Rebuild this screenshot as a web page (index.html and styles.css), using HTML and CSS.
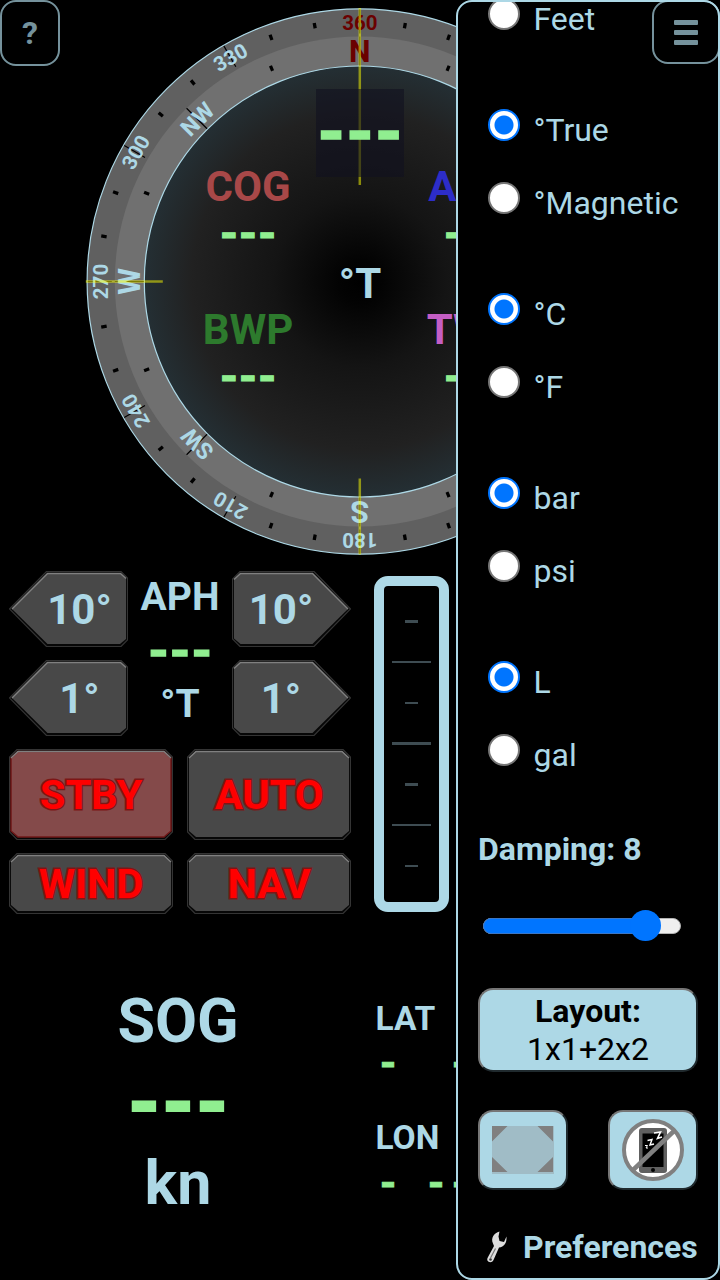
FILE: index.html
```html
<!DOCTYPE html>
<html lang="en">
<head>
    <meta charset="UTF-8">
    <meta name="viewport" content="width=device-width, initial-scale=1.0">
    <title>Instruments</title>
    <link rel="stylesheet" href="styles.css">
</head>
<body>
    <div class="screen">
        <svg class="compass" viewBox="0 0 720 560">
            <defs>
                <radialGradient id="dial">
                    <stop offset="0" stop-color="#000"/>
                    <stop offset="0.1" stop-color="#030303"/>
                    <stop offset="0.4" stop-color="#141414"/>
                    <stop offset="0.78" stop-color="#212121"/>
                    <stop offset="1" stop-color="#242f34"/>
                </radialGradient>
            </defs>
            <g transform="translate(359.8 281.5)">
                <circle r="272.7" fill="#606060"/>
                <circle r="245" fill="#707070"/>
                <circle r="215.5" fill="url(#dial)"/>
                <circle class="rim" r="272.7"/>
                <circle class="rim" r="215.5"/>
                <!-- ticks: 10deg, 30deg, 22.5deg, 45deg -->
                <circle class="tick" r="259.8" stroke-width="5.5" pathLength="360" stroke-dasharray="0 9.64 .72 9.28 .72 9.64"/>
                <circle class="tick" r="260" stroke-width="24" pathLength="360" stroke-dasharray=".26 29.74" stroke-dashoffset=".13"/>
                <circle class="tick" r="230.7" stroke-width="5.5" pathLength="360" stroke-dasharray="0 22.1 .8 22.1"/>
                <circle class="tick" r="230.5" stroke-width="29" pathLength="360" stroke-dasharray=".3 44.7" stroke-dashoffset=".15"/>
                <g class="deg">
                    <text y="-251.5" class="north">360</text>
                    <text y="-251.5" transform="rotate(30)">030</text>
                    <text y="-251.5" transform="rotate(180)">180</text>
                    <text y="-251.5" transform="rotate(210)">210</text>
                    <text y="-251.5" transform="rotate(240)">240</text>
                    <text y="-251.5" transform="rotate(270)">270</text>
                    <text y="-251.5" transform="rotate(300)">300</text>
                    <text y="-251.5" transform="rotate(330)">330</text>
                </g>
                <g class="point">
                    <text y="-219.5" class="north">N</text>
                    <text y="-219.5" transform="rotate(180)">S</text>
                    <text y="-219.5" transform="rotate(270)">W</text>
                    <text y="-221.5" class="half" transform="rotate(225)">SW</text>
                    <text y="-221.5" class="half" transform="rotate(315)">NW</text>
                </g>
                <path class="cross" d="M0-273.5V-96.5M0 273V197M-274 0H-197"/>
            </g>
            <rect x="316" y="89" width="88" height="88" fill="#101020" opacity=".6"/>
            <text class="dash" x="360" y="151.5" font-size="67">---</text>
            <g class="label" font-size="42">
                <text x="248" y="201" fill="#a84848">COG</text>
                <text x="474" y="201" fill="#2d2dc8">AWA</text>
                <text x="248" y="344" fill="#2d7a2d">BWP</text>
                <text x="472" y="344" fill="#c45ec4">TWA</text>
                <text x="360" y="298">°T</text>
            </g>
            <g font-size="44.5">
                <text class="dash" x="248" y="246.5">---</text>
                <text class="dash" x="472" y="246.5">---</text>
                <text class="dash" x="248" y="389.5">---</text>
                <text class="dash" x="472" y="389.5">---</text>
            </g>
        </svg>

        <div class="middle">
            <div class="pilot">
                <div class="row">
                    <svg class="key turn" viewBox="0 0 119 76">
                        <path class="edge" d="M.5 38 37.5.5H112L118.500 7V69L112 75.500H37.500Z"/>
                        <path class="face" d="M3 38 38.500 2.500H111.500L117 7.500V68L111 73H38.500Z"/>
                        <path class="shine" d="M3 38 38.500 2.500H111.500L117 7.500"/>
                        <text class="label" x="70.500" y="53" font-size="42">10°</text>
                    </svg>
                    <svg class="key turn" viewBox="0 0 119 76">
                        <path class="edge" d="M118.500 38 82 .5H8L.5 8V68L8 75.500H82Z"/>
                        <path class="face" d="M116 38 80.500 2.500H8.500L2 8.500V67.500L8.500 73H80.500Z"/>
                        <path class="shine" d="M116 38 80.500 2.500H8.500L2 8.500"/>
                        <text class="label" x="49" y="53" font-size="42">10°</text>
                    </svg>
                </div>
                <div class="row">
                    <svg class="key turn" viewBox="0 0 119 76">
                        <path class="edge" d="M.5 38 37.500.5H112L118.500 7V69L112 75.500H37.500Z"/>
                        <path class="face" d="M3 38 38.500 2.500H111.500L117 7.500V68L111 73H38.500Z"/>
                        <path class="shine" d="M3 38 38.500 2.500H111.500L117 7.500"/>
                        <text class="label" x="70.500" y="53" font-size="42">1°</text>
                    </svg>
                    <svg class="key turn" viewBox="0 0 119 76">
                        <path class="edge" d="M118.500 38 82 .5H8L.5 8V68L8 75.500H82Z"/>
                        <path class="face" d="M116 38 80.500 2.500H8.500L2 8.500V67.500L8.500 73H80.500Z"/>
                        <path class="shine" d="M116 38 80.500 2.500H8.500L2 8.500"/>
                        <text class="label" x="49" y="53" font-size="42">1°</text>
                    </svg>
                </div>
                <svg class="heading" viewBox="0 0 100 164">
                    <text class="label" x="49" y="39" font-size="39">APH</text>
                    <text class="dash" x="49" y="94.5" font-size="50.5">---</text>
                    <text class="label" x="49" y="146" font-size="39">°T</text>
                </svg>
                <div class="row modes">
                    <svg class="key mode on" viewBox="0 0 164 91">
                        <path class="edge" d="M8 .5H156L163.500 8V83L156 90.500H8L.5 83V8Z"/>
                        <path class="face" d="M9 2.500H155L162 9V82L155 88H9L2 82V9Z"/>
                        <path class="shine" d="M2 9 9 2.500H155L162 9"/>
                        <text x="82" y="60">STBY</text>
                    </svg>
                    <svg class="key mode" viewBox="0 0 164 91">
                        <path class="edge" d="M8 .5H156L163.500 8V83L156 90.500H8L.5 83V8Z"/>
                        <path class="face" d="M9 2.500H155L162 9V82L155 88H9L2 82V9Z"/>
                        <path class="shine" d="M2 9 9 2.500H155L162 9"/>
                        <text x="82" y="60">AUTO</text>
                    </svg>
                </div>
                <div class="row modes">
                    <svg class="key mode" viewBox="0 0 164 61">
                        <path class="edge" d="M8 .5H156L163.500 8V53L156 60.500H8L.5 53V8Z"/>
                        <path class="face" d="M9 2.500H155L162 9V52L155 58H9L2 52V9Z"/>
                        <path class="shine" d="M2 9 9 2.500H155L162 9"/>
                        <text x="82" y="45">WIND</text>
                    </svg>
                    <svg class="key mode" viewBox="0 0 164 61">
                        <path class="edge" d="M8 .5H156L163.500 8V53L156 60.500H8L.5 53V8Z"/>
                        <path class="face" d="M9 2.500H155L162 9V52L155 58H9L2 52V9Z"/>
                        <path class="shine" d="M2 9 9 2.500H155L162 9"/>
                        <text x="82" y="45">NAV</text>
                    </svg>
                </div>
            </div>
            <div class="bar">
                <i></i><i class="long"></i><i></i><i class="long"></i><i></i><i class="long"></i><i></i>
            </div>
        </div>

        <div class="bottom">
            <svg class="speed" viewBox="0 0 356 300">
                <text class="label" x="178" y="81.5" font-size="61">SOG</text>
                <text class="dash" x="178" y="166.5" font-size="79">---</text>
                <text class="label" x="178" y="244" font-size="61">kn</text>
            </svg>
            <svg class="position" viewBox="0 0 344 300">
                <text class="label left" x="-.5" y="70" font-size="33.5">LAT</text>
                <text class="dash left" x="0" y="114.5" font-size="40" xml:space="preserve">-  -</text>
                <text class="label left" x="-.5" y="189" font-size="33.5">LON</text>
                <text class="dash left" x="0" y="234.5" font-size="40" xml:space="preserve">- --</text>
            </svg>
        </div>
    </div>

    <div class="panel">
        <div class="units">
            <label><input type="radio" name="depth"><span>Feet</span></label>
        </div>
        <div class="units">
            <label><input type="radio" name="north" checked><span>°True</span></label>
            <label><input type="radio" name="north"><span>°Magnetic</span></label>
        </div>
        <div class="units">
            <label><input type="radio" name="temp" checked><span>°C</span></label>
            <label><input type="radio" name="temp"><span>°F</span></label>
        </div>
        <div class="units">
            <label><input type="radio" name="press" checked><span>bar</span></label>
            <label><input type="radio" name="press"><span>psi</span></label>
        </div>
        <div class="units">
            <label><input type="radio" name="volume" checked><span>L</span></label>
            <label><input type="radio" name="volume"><span>gal</span></label>
        </div>
        <div class="damping">Damping: 8</div>
        <div class="slider"><div class="fill"></div><div class="thumb"></div></div>
        <button class="layout"><b>Layout:</b><br>1x1+2x2</button>
        <div class="tools">
            <button>
                <svg width="62" height="48" viewBox="0 0 62 48">
                    <path fill="#a0bcc6" d="M0 0H62V48H0Z"/>
                    <path fill="#808080" d="M0 0H15.500L0 15.500ZM61 0H45.500L61 15.500ZM0 46H15.500L0 31ZM61 46H45.500L61 31Z"/>
                </svg>
            </button>
            <button>
                <svg width="62" height="62" viewBox="0 0 62 62">
                    <circle cx="31" cy="31" r="29" fill="#fff"/>
                    <rect x="17" y="9" width="28" height="45" rx="3" fill="#606060"/>
                    <rect x="20.500" y="14.500" width="21" height="33.500" fill="#000"/>
                    <circle cx="31" cy="51" r="2" fill="#000"/>
                    <path class="zzz" stroke-width="1" d="M23 26.500H25.500L24 29H26"/>
                    <path class="zzz" stroke-width="1.400" d="M25.500 21.500 30 20.500 28 26 32 25"/>
                    <path class="zzz" stroke-width="1.600" d="M32 14 38.500 13 35.500 19.500 40 18"/>
                    <circle cx="31" cy="31" r="29" fill="none" stroke="#808080" stroke-width="4"/>
                    <path d="M11 51 52 12" stroke="#808080" stroke-width="4.500"/>
                </svg>
            </button>
        </div>
        <div class="prefs">
            <svg width="22" height="34" viewBox="0 0 22 34">
                <path fill="#ddd" d="M13.500 1.500C8 3 4.500 8 7 13.500L8 16 1.500 28C0 32 5.500 34 7.500 30L13 17.500C18 17 21 13 20.500 6.500L18 12 13.500 11 12.500 6.500Z"/>
                <path stroke="#777" stroke-width="1.200" d="M4.500 28 9.500 18.500"/>
                <circle cx="4.500" cy="29.500" r="1.300" fill="#333"/>
            </svg>
            <span>Preferences</span>
        </div>
    </div>

    <button class="corner help">?</button>
    <button class="corner menu"><i></i><i></i><i></i></button>
</body>
</html>
```
FILE: styles.css
```css
body{
    margin: 0;
    background-color: black;
    color: lightblue;
    font-family: Roboto, sans-serif;
    width: 720px;
    height: 1280px;
    overflow: hidden;
    position: relative;
}
svg{
    display: block;
}
.screen{
    display: flex;
    flex-direction: column;
}
.compass{
    width: 720px;
    height: 560px;
}
.compass text{
    text-anchor: middle;
}
.rim{
    fill: none;
    stroke: lightblue;
    stroke-width: 1.2;
}
.tick{
    fill: none;
    stroke: black;
}
.deg{
    font-size: 20.5px;
    font-weight: bold;
    fill: lightblue;
}
.point{
    font-size: 30.5px;
    font-weight: bold;
    fill: lightblue;
}
.half{
    font-size: 23px;
}
.north{
    fill: #6a0000;
}
.cross{
    stroke: yellow;
    stroke-width: 2.5;
    stroke-opacity: 0.5;
}
.label{
    font-weight: bold;
    fill: lightblue;
    text-anchor: middle;
}
.dash{
    font-family: "Liberation Mono", monospace;
    font-weight: bold;
    fill: lightgreen;
    stroke: lightgreen;
    stroke-width: 0.025em;
    letter-spacing: -0.171em;
    text-anchor: middle;
    transform: translateX(-0.086em);
}
.left{
    text-anchor: start;
    letter-spacing: 0;
    transform: none;
}

/* autopilot keys */
.middle{
    display: flex;
    height: 360px;
}
.pilot{
    position: relative;
    width: 342px;
    padding: 11px 0 0 9px;
}
.row{
    display: flex;
    justify-content: space-between;
    margin-bottom: 13px;
}
.turn{
    width: 119px;
    height: 76px;
}
.mode{
    width: 164px;
}
.edge{
    fill: #070707;
    stroke: #343434;
    stroke-width: 1.2;
}
.face{
    fill: #484848;
}
.shine{
    fill: none;
    stroke: #808080;
    stroke-width: 1.5;
}
.mode text{
    font-size: 41.5px;
    font-weight: bold;
    fill: red;
    stroke: #7c1616;
    stroke-width: 3;
    paint-order: stroke;
    text-anchor: middle;
}
.on .face{
    fill: #844a4a;
    stroke: #701818;
    stroke-width: 1.5;
}
.heading{
    position: absolute;
    left: 131px;
    top: 11px;
    width: 100px;
    height: 164px;
}
.bar{
    display: flex;
    flex-direction: column;
    align-items: center;
    box-sizing: border-box;
    width: 75px;
    height: 336px;
    margin: 16px 0 0 23px;
    padding-top: 34px;
    gap: 38.3px;
    border: 10px solid lightblue;
    border-radius: 14px;
}
.bar i{
    width: 13px;
    height: 2.5px;
    background-color: #3e4c52;
}
.bar .long{
    width: 39px;
}

.bottom{
    display: flex;
    gap: 20px;
    padding-top: 40px;
}
.speed{
    width: 356px;
    height: 300px;
}
.position{
    width: 344px;
    height: 300px;
}

/* settings panel */
.panel{
    position: absolute;
    left: 456px;
    top: 0;
    width: 264px;
    height: 1280px;
    box-sizing: border-box;
    padding: 0 20px;
    border: 2px solid lightblue;
    border-radius: 16px;
    background-color: black;
    font-size: 32px;
    overflow: hidden;
}
.units{
    margin-bottom: 38px;
}
.units:first-child{
    margin-top: -22px;
}
.units label{
    display: flex;
    height: 73px;
}
.units span{
    line-height: 38px;
    margin: 20px 0 0 13.5px;
}
.units input{
    appearance: none;
    box-sizing: border-box;
    width: 32px;
    height: 32px;
    margin: 18px 0 0 10px;
    border: 2px solid #767676;
    border-radius: 50%;
    background: white;
}
.units input:checked{
    border-color: #0075ff;
    background: radial-gradient(circle, #0075ff 9px, white 10px);
}
.damping{
    height: 38px;
    line-height: 38px;
    margin-top: 41px;
    font-weight: bold;
}
.slider{
    position: relative;
    box-sizing: border-box;
    width: 198px;
    height: 16px;
    margin: 50px 0 54px 5px;
    border: 1px solid #b2b2b2;
    border-radius: 8px;
    background-color: #efefef;
}
.fill{
    position: absolute;
    left: -1px;
    top: -1px;
    box-sizing: border-box;
    width: 162px;
    height: 16px;
    border: 1px solid #3b76c4;
    border-radius: 8px;
    background-color: #0075ff;
}
.thumb{
    position: absolute;
    left: 145.5px;
    top: -9px;
    width: 31px;
    height: 31px;
    border-radius: 50%;
    background-color: #0075ff;
}
.panel button{
    box-sizing: border-box;
    border: 2px solid;
    border-color: #767676 #202a2e #202a2e #767676;
    border-radius: 15px;
    background-color: lightblue;
    color: black;
    font: 32px/38px Roboto, sans-serif;
}
.layout{
    display: block;
    width: 220px;
    height: 84px;
    padding: 0;
}
.tools{
    display: flex;
    justify-content: space-between;
    margin-top: 38px;
}
.tools button{
    display: flex;
    align-items: center;
    justify-content: center;
    width: 90px;
    height: 80px;
    padding: 0;
}
.zzz{
    fill: none;
    stroke: white;
}
.prefs{
    display: flex;
    align-items: center;
    gap: 15px;
    height: 38px;
    margin: 38px 0 0 8px;
    font-weight: bold;
}

.corner{
    position: absolute;
    top: 0;
    box-sizing: border-box;
    padding: 0;
    border: 2px solid lightblue;
    border-radius: 16px;
    background: none;
    color: lightblue;
    opacity: 0.68;
    font: bold 32px Roboto, sans-serif;
}
.help{
    left: 0;
    width: 60px;
    height: 66px;
}
.menu{
    display: flex;
    flex-direction: column;
    align-items: center;
    justify-content: center;
    gap: 5px;
    right: 0;
    width: 68px;
    height: 64px;
}
.menu i{
    width: 24px;
    height: 5px;
    border-radius: 1px;
    background-color: lightblue;
}
```
